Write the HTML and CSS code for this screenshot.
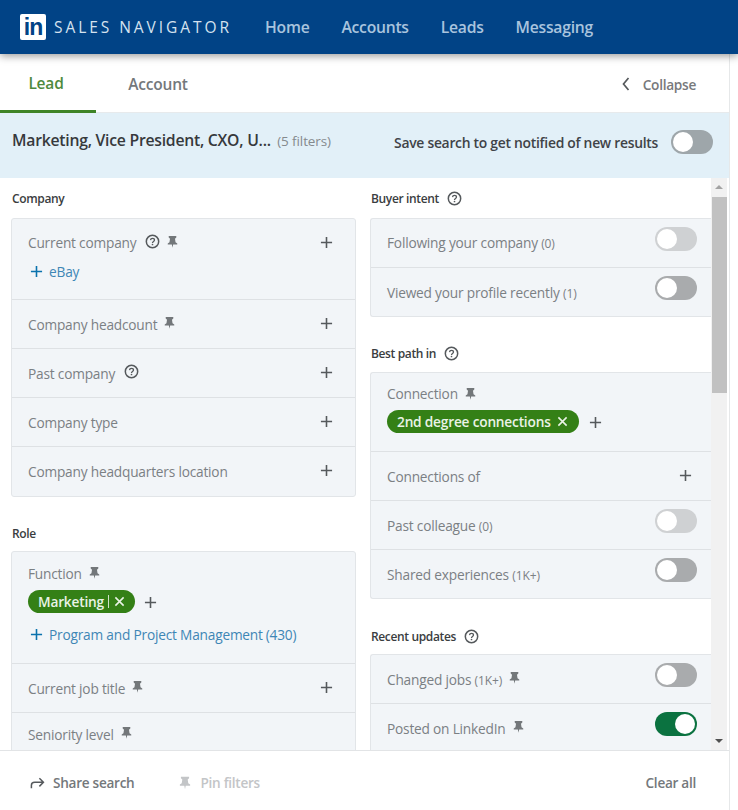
FILE: index.html
```html
<!DOCTYPE html>
<html lang="en">
<head>
<meta charset="utf-8">
<title>Sales Navigator</title>
<link rel="stylesheet" href="styles.css">
</head>
<body>
<svg class="defs" width="0" height="0" aria-hidden="true">
  <symbol id="pin" viewBox="0 0 12 12"><path d="M2.5 1h7v1.3L8.3 3.4 8.8 6.6 10.4 7.8V8.8H6.6L6 11.8 5.4 8.8H1.6V7.8L3.2 6.6 3.7 3.4 2.5 2.3Z" fill="currentColor"/></symbol>
  <symbol id="help" viewBox="0 0 16 16"><circle cx="8" cy="8" r="6.6" fill="none" stroke="currentColor" stroke-width="1.6"/><path d="M5.9 6.5C6 5.2 6.9 4.6 8 4.6c1.2 0 2.1.7 2.1 1.8 0 1.6-2.1 1.6-2.1 3.2" fill="none" stroke="currentColor" stroke-width="1.4"/><circle cx="8" cy="11.2" r=".9" fill="currentColor"/></symbol>
  <symbol id="plus" viewBox="0 0 14 14"><path d="M7 1v12M1 7h12" fill="none" stroke="currentColor" stroke-width="1.7"/></symbol>
  <symbol id="x" viewBox="0 0 12 12"><path d="M1.5 1.5l9 9M10.5 1.5l-9 9" fill="none" stroke="currentColor" stroke-width="1.7"/></symbol>
</svg>

<div class="panel">
  <header class="topbar">
    <div class="brand">
      <span class="logo">in</span>
      <span class="wordmark">SALES NAVIGATOR</span>
    </div>
    <nav class="topnav">
      <a>Home</a><a>Accounts</a><a>Leads</a><a>Messaging</a>
    </nav>
  </header>

  <div class="tabs">
    <a class="tab tab-active">Lead</a>
    <a class="tab">Account</a>
    <a class="collapse">
      <svg class="chev" viewBox="0 0 8 14" width="8" height="14"><path d="M6.5 1L1.5 7l5 6" fill="none" stroke="currentColor" stroke-width="1.7"/></svg>
      Collapse
    </a>
  </div>

  <div class="banner">
    <div class="banner-title"><strong>Marketing, Vice President, CXO, U...</strong> <span class="count">(5 filters)</span></div>
    <div class="banner-save">
      <span>Save search to get notified of new results</span>
      <span class="toggle toggle-banner"></span>
    </div>
  </div>

  <div class="content">
    <div class="columns">
      <div class="col col-left">
        <section class="group">
          <h3 class="group-title">Company</h3>
          <div class="card">
            <div class="row row-company">
              <div class="row-head"><span class="label">Current company</span><svg class="ic-help gap-l"><use href="#help"/></svg><svg class="ic-pin"><use href="#pin"/></svg><svg class="ic-plus end"><use href="#plus"/></svg></div>
              <div class="suggest suggest-first"><svg class="ic-plus-blue"><use href="#plus"/></svg>eBay</div>
            </div>
            <div class="row"><div class="row-head"><span class="label">Company headcount</span><svg class="ic-pin"><use href="#pin"/></svg><svg class="ic-plus end"><use href="#plus"/></svg></div></div>
            <div class="row"><div class="row-head"><span class="label">Past company</span><svg class="ic-help gap-l"><use href="#help"/></svg><svg class="ic-plus end"><use href="#plus"/></svg></div></div>
            <div class="row"><div class="row-head"><span class="label">Company type</span><svg class="ic-plus end"><use href="#plus"/></svg></div></div>
            <div class="row row-last"><div class="row-head"><span class="label">Company headquarters location</span><svg class="ic-plus end"><use href="#plus"/></svg></div></div>
          </div>
        </section>
        <section class="group group-role">
          <h3 class="group-title">Role</h3>
          <div class="card">
            <div class="row row-function">
              <div class="row-head row-head-tight"><span class="label">Function</span><svg class="ic-pin"><use href="#pin"/></svg></div>
              <div class="chips"><span class="chip chip-small">Marketing<i class="chip-sep"></i><svg class="ic-x"><use href="#x"/></svg></span><svg class="ic-plus"><use href="#plus"/></svg></div>
              <div class="suggest"><svg class="ic-plus-blue"><use href="#plus"/></svg>Program and Project Management<span class="num">(430)</span></div>
            </div>
            <div class="row"><div class="row-head"><span class="label">Current job title</span><svg class="ic-pin"><use href="#pin"/></svg><svg class="ic-plus end"><use href="#plus"/></svg></div></div>
            <div class="row"><div class="row-head row-head-senior"><span class="label">Seniority level</span><svg class="ic-pin"><use href="#pin"/></svg></div></div>
          </div>
        </section>
      </div>

      <div class="col col-right">
        <section class="group">
          <h3 class="group-title">Buyer intent<svg class="ic-help-title"><use href="#help"/></svg></h3>
          <div class="card card-open">
            <div class="row"><div class="row-head"><span class="label">Following your company <small>(0)</small></span><span class="toggle toggle-off end"></span></div></div>
            <div class="row"><div class="row-head"><span class="label">Viewed your profile recently <small>(1)</small></span><span class="toggle end"></span></div></div>
          </div>
        </section>
        <section class="group group-path">
          <h3 class="group-title">Best path in<svg class="ic-help-title"><use href="#help"/></svg></h3>
          <div class="card card-open">
            <div class="row row-connection">
              <div class="row-head row-head-tight"><span class="label">Connection</span><svg class="ic-pin"><use href="#pin"/></svg></div>
              <div class="chips"><span class="chip">2nd degree connections<svg class="ic-x"><use href="#x"/></svg></span><svg class="ic-plus"><use href="#plus"/></svg></div>
            </div>
            <div class="row"><div class="row-head"><span class="label">Connections of</span><svg class="ic-plus end"><use href="#plus"/></svg></div></div>
            <div class="row"><div class="row-head"><span class="label">Past colleague <small>(0)</small></span><span class="toggle toggle-off end"></span></div></div>
            <div class="row"><div class="row-head"><span class="label">Shared experiences <small>(1K+)</small></span><span class="toggle end"></span></div></div>
          </div>
        </section>
        <section class="group group-updates">
          <h3 class="group-title">Recent updates<svg class="ic-help-title"><use href="#help"/></svg></h3>
          <div class="card card-open">
            <div class="row"><div class="row-head"><span class="label">Changed jobs <small>(1K+)</small></span><svg class="ic-pin"><use href="#pin"/></svg><span class="toggle end"></span></div></div>
            <div class="row"><div class="row-head"><span class="label">Posted on LinkedIn</span><svg class="ic-pin"><use href="#pin"/></svg><span class="toggle toggle-on end"></span></div></div>
          </div>
        </section>
      </div>
    </div>
    <div class="scrollbar">
      <span class="arrow arrow-up"></span>
      <span class="thumb"></span>
      <span class="arrow arrow-down"></span>
    </div>
  </div>

  <footer class="footer">
    <a class="foot-link">
      <svg class="foot-ic" viewBox="0 0 16 14"><path d="M1.5 12.5V9.5C1.5 7.5 3 6.3 5 6.3h9M10 2l4.3 4.3L10 10.6" fill="none" stroke="currentColor" stroke-width="1.6"/></svg>
      Share search
    </a>
    <a class="foot-link foot-disabled">
      <svg class="foot-ic foot-pin"><use href="#pin"/></svg>
      Pin filters
    </a>
    <a class="foot-link foot-clear">Clear all</a>
  </footer>
</div>
</body>
</html>
```
FILE: styles.css
```css
* { box-sizing: border-box; }
html, body { margin: 0; padding: 0; background: #fff; }
body {
  width: 738px;
  height: 810px;
  overflow: hidden;
  font-family: "Open Sans", "Noto Sans", "Liberation Sans", sans-serif;
  color: #6f7478;
}
.defs { display: block; height: 0; }
.panel {
  width: 730px;
  height: 810px;
  display: flex;
  flex-direction: column;
  border-right: 1px solid #e6e8e9;
  position: relative;
}
.topbar {
  height: 54px;
  width: 738px;
  flex: none;
  background: #014386;
  display: flex;
  align-items: center;
  padding-left: 20px;
  box-shadow: 0 2px 8px rgba(0, 0, 0, .4);
  position: relative;
  z-index: 2;
}
.brand { display: flex; align-items: center; }
.logo {
  width: 26px;
  height: 26px;
  background: #fff;
  color: #014386;
  border-radius: 2px;
  font: 700 23px/27px "Liberation Sans", sans-serif;
  letter-spacing: -1px;
  text-align: center;
}
.wordmark {
  margin-left: 8px;
  color: #d5e2ef;
  font-size: 15.5px;
  font-weight: 400;
  letter-spacing: 2.95px;
}
.topnav { display: flex; gap: 32px; margin-left: 33px; }
.topnav a { color: #a9c4de; font-size: 15.7px; font-weight: 600; letter-spacing: -.25px; }

.tabs {
  height: 59px;
  flex: none;
  display: flex;
  align-items: stretch;
  border-bottom: 1px solid #e7eaec;
  background: #fff;
}
.tab {
  width: 96px;
  display: flex;
  align-items: center;
  justify-content: center;
  font-size: 15.5px;
  font-weight: 600;
  color: #74787b;
  padding-top: 2px;
  letter-spacing: -.2px;
}
.tab + .tab { width: 124px; }
.tab-active { color: #4e8a3d; border-bottom: 3px solid #3f8427; margin-bottom: -1px; padding-right: 4px; }
.collapse {
  margin-left: auto;
  margin-right: 33px;
  display: flex;
  align-items: center;
  gap: 13px;
  padding-top: 3px;
  font-size: 13.7px;
  font-weight: 600;
  color: #77797c;
  letter-spacing: -.3px;
}
.chev { color: #55595c; margin-top: -2px; }

.banner {
  height: 65px;
  flex: none;
  background: #e2f0f8;
  display: flex;
  padding: 0 16px 0 12px;
  justify-content: space-between;
}
.banner-title { margin-top: 16px; font-size: 13.5px; color: #858a8e; line-height: 22px; letter-spacing: -.1px; }
.banner-title strong { font-size: 15.75px; font-weight: 600; color: #36393c; letter-spacing: -.25px; margin-right: 3px; }
.banner-save {
  display: flex;
  align-items: center;
  gap: 13px;
  height: 24px;
  margin-top: 17px;
  font-size: 13.9px;
  font-weight: 600;
  color: #3f4347;
  letter-spacing: -.28px;
}

.toggle {
  width: 42px;
  height: 24px;
  border-radius: 12px;
  background: #a9abad;
  position: relative;
  flex: none;
  display: block;
}
.toggle::after {
  content: "";
  position: absolute;
  left: 2px;
  top: 2px;
  width: 20px;
  height: 20px;
  border-radius: 50%;
  background: #fff;
}
.toggle-banner { background: #9ea6aa; }
.toggle-off { background: #cfd1d3; }
.toggle-on { background: #0b7240; }
.toggle-on::after { left: 20px; }

.content {
  flex: 1;
  min-height: 0;
  display: flex;
  overflow: hidden;
}
.columns {
  width: 711px;
  flex: none;
  display: grid;
  grid-template-columns: 345px 345px;
  column-gap: 14px;
  padding: 0 0 0 11px;
  overflow: hidden;
}
.scrollbar {
  width: 16px;
  flex: none;
  background: #f1f1f1;
  display: flex;
  flex-direction: column;
  align-items: center;
}
.thumb { width: 15px; height: 196px; background: #c1c1c1; margin-top: 8px; }
.arrow { width: 0; height: 0; border-left: 4px solid transparent; border-right: 4px solid transparent; }
.arrow-up { border-bottom: 4px solid #a3a3a3; margin-top: 7px; }
.arrow-down { border-top: 4px solid #505050; margin-top: auto; margin-bottom: 7px; }

.group-title {
  margin: 0;
  height: 40px;
  padding: 12px 0 0 1px;
  font-size: 12px;
  line-height: 18px;
  font-weight: 600;
  color: #3a3d40;
  letter-spacing: -.36px;
  display: flex;
  align-items: flex-start;
}
.group-role { margin-top: 15px; }
.group-path { margin-top: 16px; }
.group-updates { margin-top: 16px; }
.group-path .group-title, .group-updates .group-title, .group-role .group-title { height: 39px; }
.group-updates .group-title, .group-role .group-title { padding-top: 13px; }
.ic-help-title { width: 15px; height: 15px; margin: 1px 0 0 8px; color: #55595c; }

.card {
  background: #f2f5f8;
  border: 1px solid #e2e5e8;
  border-radius: 3px;
}
.row { border-top: 1px solid #dee1e4; padding: 0 16px; min-height: 49px; }
.row:first-child { border-top: 0; min-height: 48px; }
.row:first-child .label { margin-top: -2px; }
.group-updates .row:first-child .label { margin-top: 0; }
.row-last { min-height: 50px; }
.row-company { height: 80px; }
.row-function { height: 111px; }
.row-connection { height: 78px; }
.row-head { display: flex; align-items: center; height: 48px; }
.row-head-tight { height: 44px; }
.row-head-senior { height: 42px; }
.row-connection .row-head-tight { height: 43px; }
.label { font-size: 13.7px; color: #7b8084; letter-spacing: -.2px; }
.label small { font-size: 12px; letter-spacing: -.1px; }
.end { margin-left: auto; }
.row-head .toggle.end { margin-right: -2px; margin-top: -9px; }
.row-head .ic-plus.end { margin-right: 6px; margin-top: -1px; }
.col-right .row-head .ic-plus.end { margin-right: 3px; }
.ic-pin { width: 13px; height: 13px; margin: -3px 0 0 6px; color: #73777a; flex: none; }
.ic-help { width: 15px; height: 15px; color: #55595c; flex: none; margin-top: -3px; }
.gap-l { margin-left: 9px; }
.gap-l + .ic-pin { margin-left: 6px; }
.ic-plus { width: 13px; height: 13px; color: #55595c; flex: none; display: block; }
.suggest {
  display: flex;
  align-items: center;
  color: #3e86b5;
  font-size: 13.7px;
  letter-spacing: -.2px;
  margin-top: 12px;
}
.suggest-first { margin-top: -5px; }
.ic-plus-blue { width: 13px; height: 13px; margin: 0 6px 0 2px; color: #0a72ad; flex: none; }
.num { margin-left: 3px; }
.chips { display: flex; align-items: center; gap: 9px; margin-top: -6px; }
.chip {
  height: 23px;
  border-radius: 12px;
  background: #348016;
  color: #eaf3e6;
  font-size: 13.7px;
  font-weight: 600;
  letter-spacing: -.2px;
  display: flex;
  align-items: center;
  padding: 0 10px;
  gap: 6px;
}
.chip-small { gap: 0; }
.chip-sep { width: 1px; height: 13px; background: #cfe2c6; margin: 0 5px 0 4px; }
.ic-x { width: 11px; height: 11px; color: #eaf3e6; flex: none; }
.chips .ic-plus { margin-top: 2px; }

.row-connection .chips { margin-top: -6px; gap: 10px; }
.row-connection .chip { padding-right: 11px; }
.col-right { width: 345px; }
.card-open { border-right: 0; border-radius: 3px 0 0 3px; width: 341px; }

.footer {
  height: 60px;
  flex: none;
  background: #fff;
  border-top: 1px solid #e2e4e6;
  display: flex;
  align-items: center;
  padding: 4px 33px 0 30px;
  font-size: 13.6px;
  font-weight: 600;
  color: #74787b;
  letter-spacing: -.28px;
}
.foot-link { display: flex; align-items: center; }
.foot-ic { width: 15px; height: 14px; margin-right: 8px; color: #55595c; }
.foot-disabled { color: #c3c5c7; margin-left: 44px; }
.foot-pin { color: #c3c5c7; width: 14px; height: 15px; }
.foot-clear { margin-left: auto; }
```
